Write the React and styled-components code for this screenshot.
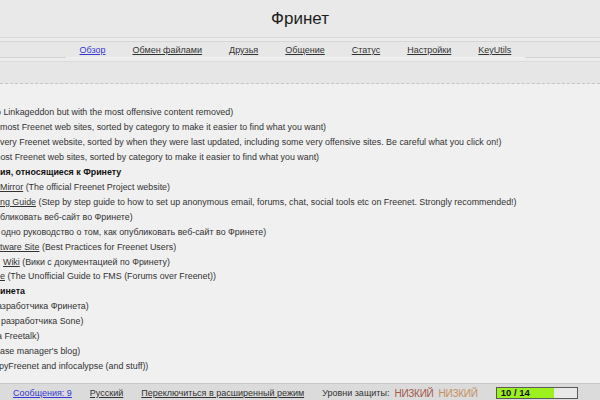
import React from 'react';
import styled, { createGlobalStyle } from 'styled-components';

const GlobalStyle = createGlobalStyle`
  html, body {
    margin: 0;
    height: 100%;
    overflow: hidden;
    background: #f0f0f0;
    font-family: "Liberation Sans", Arial, sans-serif;
  }
  #root {
    height: 100%;
  }
`;

const Page = styled.div`
  display: flex;
  flex-direction: column;
  height: 100vh;
`;

const Header = styled.header`
  background: #e9e9e9;
`;

const Title = styled.h1`
  margin: 0;
  height: 37px;
  display: flex;
  align-items: center;
  justify-content: center;
  font-size: 17px;
  font-weight: normal;
  color: #1e1e1e;
  border-bottom: 1px solid #d8d8d8;
`;

const NavHolder = styled.div`
  padding-top: 3px;
  background: #ececec;
`;

const Nav = styled.nav`
  display: flex;
  height: 15px;
  padding-left: 66px;
  border-top: 1px solid #d6d6d6;
  border-bottom: 1px solid #d2d2d2;
  background: #e7e7e7;
`;

const Tab = styled.a`
  display: flex;
  align-items: center;
  padding: 1px 13.5px 0;
  font-size: 9px;
  color: ${p => (p.$active ? '#3636d4' : '#333')};
  text-decoration: underline;
  border-bottom: 1px solid #f2f2f2;
  margin-bottom: -1px;
`;

const SubBand = styled.div`
  margin-top: 3px;
  height: 21px;
  border-top: 1px solid #dcdcdc;
  border-bottom: 1px dashed #c6c6c6;
  background: #e6e6e6;
`;

const Content = styled.main`
  flex: 1;
  overflow: hidden;
  padding-top: 21px;
  background: #f0f0f0;
`;

const Row = styled.div`
  margin-left: ${p => p.$shift}px;
  font-size: 8.9px;
  line-height: 14.95px;
  white-space: nowrap;
  color: ${p => (p.$bold ? '#111' : '#333')};
  font-weight: ${p => (p.$bold ? 'bold' : 'normal')};
`;

const ItemLink = styled.a`
  color: #333;
  text-decoration: underline;
`;

const StatusBar = styled.footer`
  display: flex;
  align-items: center;
  gap: 18px;
  height: 14px;
  padding: 2px 0 0 13px;
  border-top: 1px solid #c9c9c9;
  background: #dbdbdb;
  font-size: 9px;
  white-space: nowrap;
`;

const StatusLink = styled.a`
  color: ${p => (p.$blue ? '#3636d4' : '#333')};
  text-decoration: underline;
`;

const Security = styled.div`
  display: flex;
  align-items: center;
  gap: 5px;
  color: #333;
`;

const Level = styled.span`
  font-size: 10px;
  letter-spacing: -0.25px;
  color: ${p => p.$tone};
`;

const Meter = styled.div`
  position: relative;
  width: 80px;
  height: 10px;
  border: 1px solid #5a5a5a;
  background: #e8e8e8;
`;

const MeterFill = styled.div`
  height: 100%;
  background: #9cf01e;
`;

const MeterText = styled.span`
  position: absolute;
  left: 4px;
  top: 0;
  line-height: 10px;
  font-size: 9.5px;
  font-weight: bold;
  color: #111;
`;

const tabs = ['Обзор', 'Обмен файлами', 'Друзья', 'Общение', 'Статус', 'Настройки', 'KeyUtils'];

const rows = [
  { shift: -4, text: 'o Linkageddon but with the most offensive content removed)' },
  { shift: 0, text: 'most Freenet web sites, sorted by category to make it easier to find what you want)' },
  { shift: 0, text: 'very Freenet website, sorted by when they were last updated, including some very offensive sites. Be careful what you click on!)' },
  { shift: -7, text: 'most Freenet web sites, sorted by category to make it easier to find what you want)' },
  { shift: 0, bold: true, text: 'ия, относящиеся к Фринету' },
  { shift: 0, link: 'Mirror', text: ' (The official Freenet Project website)' },
  { shift: 0, link: 'ng Guide', text: ' (Step by step guide to how to set up anonymous email, forums, chat, social tools etc on Freenet. Strongly recommended!)' },
  { shift: 0, text: 'бликовать веб-сайт во Фринете)' },
  { shift: 1, text: 'одно руководство о том, как опубликовать веб-сайт во Фринете)' },
  { shift: 0, link: 'tware Site', text: ' (Best Practices for Freenet Users)' },
  { shift: 3, link: 'Wiki', text: ' (Вики с документацией по Фринету)' },
  { shift: 0, link: 'e', text: ' (The Unofficial Guide to FMS (Forums over Freenet))' },
  { shift: 0, bold: true, text: 'инета' },
  { shift: -3, text: 'азработчика Фринета)' },
  { shift: 1, text: 'разработчика Sone)' },
  { shift: -3, text: 'a Freetalk)' },
  { shift: 0, text: "ase manager's blog)" },
  { shift: -1, text: 'pyFreenet and infocalypse (and stuff))' },
];

export default function App() {
  const done = 10;
  const total = 14;
  return (
    <Page>
      <GlobalStyle />
      <Header>
        <Title>Фринет</Title>
        <NavHolder>
          <Nav>
            {tabs.map((t, i) => (
              <Tab key={t} href="#" $active={i === 0}>{t}</Tab>
            ))}
          </Nav>
          <SubBand />
        </NavHolder>
      </Header>
      <Content>
        {rows.map((r, i) => (
          <Row key={i} $shift={r.shift} $bold={r.bold}>
            {r.link && <ItemLink href="#">{r.link}</ItemLink>}
            {r.text}
          </Row>
        ))}
      </Content>
      <StatusBar>
        <StatusLink href="#" $blue>Сообщения: 9</StatusLink>
        <StatusLink href="#">Русский</StatusLink>
        <StatusLink href="#">Переключиться в расширенный режим</StatusLink>
        <Security>
          <span>Уровни защиты:</span>
          <Level $tone="#a3584a">НИЗКИЙ</Level>
          <Level $tone="#c4905f">НИЗКИЙ</Level>
        </Security>
        <Meter>
          <MeterFill style={{ width: `${(done / total) * 100}%` }} />
          <MeterText>{done} / {total}</MeterText>
        </Meter>
      </StatusBar>
    </Page>
  );
}
